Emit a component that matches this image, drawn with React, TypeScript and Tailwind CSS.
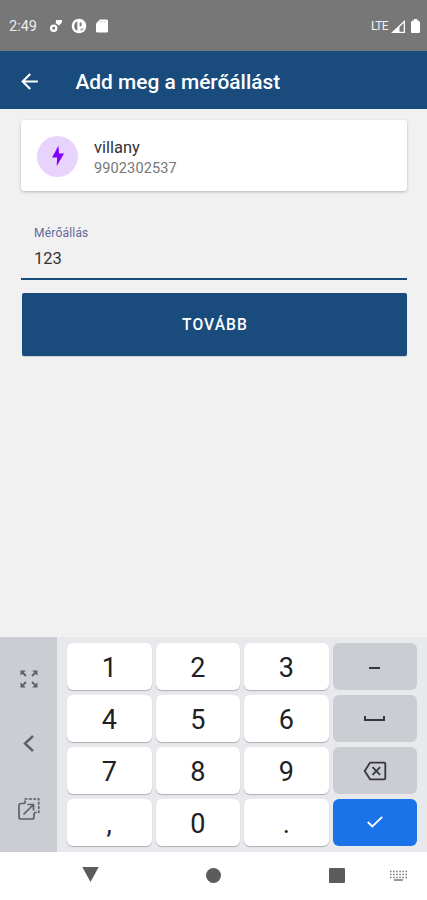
import React from 'react';

function Glyph({ d, className, box = '0 0 24 24' }: { d: string; className: string; box?: string }) {
  return (
    <svg viewBox={box} className={className} fill="currentColor" aria-hidden="true">
      <path fillRule="evenodd" d={d} />
    </svg>
  );
}

function StatusBar() {
  return (
    <div className="flex h-[51px] items-center justify-between bg-[#777777] pt-[2px] pl-[9px] pr-[7px] text-white">
      <div className="flex items-center">
        <span className="w-[40px] pt-px text-[14.5px] leading-5 text-[#ececec]">2:49</span>
        <svg viewBox="0 0 14 14" className="mt-[-1px] h-[14px] w-[14px]" aria-hidden="true">
          <circle cx="4.7" cy="9.2" r="2.6" fill="none" stroke="white" strokeWidth="2.3" />
          <path fill="white" d="M7.2 1H13v2.2L10.2 6.4 6.6 4.2z" />
        </svg>
        <svg viewBox="0 0 16 16" className="ml-[8px] mt-[-1px] h-[16px] w-[16px]" aria-hidden="true">
          <circle cx="8" cy="8" r="7.3" fill="white" />
          <path d="M6.3 3.2v9.6A5.3 5.3 0 0 1 6.3 3.2z" fill="#777777" />
          <path d="M8.6 4.6h1.9v3.6H8.6z" fill="#777777" />
          <path d="M9.6 10.6h3.2a5.3 5.3 0 0 1-3.2 2.6z" fill="#a8a8a8" />
        </svg>
        <svg viewBox="0 0 12 14" className="ml-[9px] mt-[-1px] h-[14px] w-[12px]" aria-hidden="true">
          <path fill="white" d="M4 .5h6.7a1.3 1.3 0 0 1 1.3 1.3v10.4a1.3 1.3 0 0 1-1.3 1.3H1.3A1.3 1.3 0 0 1 0 12.2V4.5z" />
          <path d="M4.5 2v1.3M6.7 2v1.3M8.9 2v1.3" stroke="#aaaaaa" strokeWidth=".8" />
        </svg>
      </div>
      <div className="flex items-center">
        <span className="mt-[-1px] text-[12px] leading-5 tracking-[-0.6px] text-[#f2f2f2]">LTE</span>
        <svg viewBox="0 0 14 13" className="ml-[3px] mt-[-1px] h-[13px] w-[14px]" aria-hidden="true">
          <path d="M0 13L14 0v13zM8.5 7v4.7h4.2V3.1z" fillRule="evenodd" fill="white" />
        </svg>
        <svg viewBox="0 0 9 14" className="ml-[6px] mt-[-1px] h-[14px] w-[9px]" aria-hidden="true">
          <path fill="white" d="M2.8 0h3.4v1.5h1.2L9 3v10a1 1 0 0 1-1 1H1a1 1 0 0 1-1-1V3l1.6-1.5h1.2z" />
        </svg>
      </div>
    </div>
  );
}

function AppBar() {
  return (
    <header className="flex h-[58px] items-center bg-[#194b7d] pt-[2px] pl-[17px] text-white">
      <Glyph className="h-[25px] w-[25px]" d="M20 11H7.83l5.59-5.59L12 4l-8 8 8 8 1.41-1.41L7.83 13H20v-2z" />
      <h1 className="ml-[33.5px] pt-px text-[20.9px] font-medium leading-7 whitespace-nowrap">Add meg a mérőállást</h1>
    </header>
  );
}

function MeterCard() {
  return (
    <section className="mx-[21px] mt-[11px] flex h-[71px] w-[386px] items-center rounded-[3px] bg-white pl-4 shadow-[0_1px_3px_rgba(0,0,0,0.25)]">
      <div className="mt-[1px] flex h-[41px] w-[41px] items-center justify-center rounded-full bg-[#e8d3fd]">
        <svg viewBox="0 0 14 22" className="h-[22px] w-[14px]" aria-hidden="true">
          <path fill="#8000ff" d="M7.4.8L1.1 12.4h5L5.7 21.3 13 8.6H8z" />
        </svg>
      </div>
      <div className="ml-4 pt-[4px]">
        <p className="text-[16.5px] leading-[21px] text-[#333333]">villany</p>
        <p className="text-[14.5px] leading-[21px] tracking-[0.13px] text-[#777777]">9902302537</p>
      </div>
    </section>
  );
}

function MeterInput() {
  return (
    <div className="mx-[21px] mt-[24px] flex h-[65px] w-[386px] flex-col border-b-2 border-[#194b7d] pt-[10px] pl-[13px]">
      <span className="text-[12px] leading-4 tracking-[0.2px] text-[#62689c]">Mérőállás</span>
      <span className="mt-[8px] text-[16.5px] leading-5 text-[#333333]">123</span>
    </div>
  );
}

const whiteKey = 'bg-white text-[#202124] shadow-[0_1px_1px_rgba(0,0,0,0.25)]';
const grayKey = 'bg-[#cccdd3] text-[#35373b]';

function Key({ children, className = whiteKey }: { children: React.ReactNode; className?: string }) {
  return <button className={`flex items-center justify-center rounded-[6px] pt-[3px] text-[27px] leading-none ${className}`}>{children}</button>;
}

function Keyboard() {
  return (
    <div className="flex h-[215px] bg-[#e8e9ed]">
      <aside className="flex w-[57px] flex-col items-center bg-[#cccdd3] pt-[33px] text-[#5f6167]">
        <svg viewBox="0 0 18 18" className="h-[18px] w-[18px]" aria-hidden="true">
          <path fill="currentColor" d="M.5.5h5.3L.5 5.8zM17.5.5v5.3L12.2.5zM.5 17.5v-5.3l5.3 5.3zM17.5 17.5h-5.3l5.3-5.3z" />
          <path stroke="currentColor" strokeWidth="1.8" d="M2 2l4 4M16 2l-4 4M2 16l4-4M16 16l-4-4" />
        </svg>
        <svg viewBox="0 0 11 17" className="mt-[47px] h-[17px] w-[11px]" fill="none" stroke="currentColor" strokeWidth="2.4" aria-hidden="true">
          <path d="M10 1L2 8.5 10 16" />
        </svg>
        <svg viewBox="0 0 22 22" className="mt-[46px] h-[22px] w-[22px]" fill="none" stroke="currentColor" strokeWidth="1.7" aria-hidden="true">
          <path d="M6.8 5.5H3a2 2 0 0 0-2 2V19a2 2 0 0 0 2 2h11a2 2 0 0 0 2-2v-4M5.5 16.5L15 7M9.5 6.5h6v6" />
          <path d="M7 5.5V1h13.7v13.5H16" strokeDasharray="3 1.2" />
        </svg>
      </aside>
      <div className="grid flex-1 grid-cols-4 grid-rows-4 gap-x-[4px] gap-y-[5px] pt-[6px] pr-[10px] pb-[6px] pl-[10px]">
        <Key>1</Key>
        <Key>2</Key>
        <Key>3</Key>
        <Key className={grayKey}>
          <span className="mt-[-1px] h-[2px] w-[11px] bg-current" />
        </Key>
        <Key>4</Key>
        <Key>5</Key>
        <Key>6</Key>
        <Key className={grayKey}>
          <span className="mt-[-3px] h-[5px] w-[21px] border-2 border-t-0 border-current" />
        </Key>
        <Key>7</Key>
        <Key>8</Key>
        <Key>9</Key>
        <Key className={grayKey}>
          <svg viewBox="0 0 24 20" className="mt-[-2px] h-[20px] w-[24px]" fill="none" stroke="currentColor" strokeWidth="1.8" aria-hidden="true">
            <path d="M7 1.7h14.3a1 1 0 0 1 1 1v14.6a1 1 0 0 1-1 1H7L1.7 10z" strokeLinejoin="round" />
            <path d="M9.5 6.1l7.6 7.8M17.1 6.1l-7.6 7.8" />
          </svg>
        </Key>
        <Key>,</Key>
        <Key>0</Key>
        <Key>.</Key>
        <Key className="bg-[#1a73e8] text-white">
          <svg viewBox="0 0 16 12" className="mt-[-4px] h-[12px] w-[16px]" fill="none" stroke="currentColor" strokeWidth="1.8" aria-hidden="true">
            <path d="M.8 6l4.5 4.5L15.2.8" />
          </svg>
        </Key>
      </div>
    </div>
  );
}

function NavigationBar() {
  return (
    <nav className="flex h-[48px] items-center bg-white pl-[82px] text-[#5c5c5c]">
      <Glyph className="mt-[-3px] h-[15px] w-[17px]" box="0 0 17 15" d="M.3 0h16.4L8.5 15z" />
      <span className="ml-[107px] mt-[-1px] h-[15px] w-[15px] rounded-full bg-current" />
      <span className="ml-[108px] mt-[-1px] h-[15px] w-[16px] rounded-[1px] bg-current" />
      <svg viewBox="0 0 17 11" className="ml-[45px] mt-[-2px] h-[11px] w-[17px]" fill="none" stroke="#777777" aria-hidden="true">
        <path d="M0 1.5h17M0 4.5h17M0 7.5h17" strokeWidth="1.5" strokeDasharray="1.5 1.6" />
        <path d="M4 10h9" strokeWidth="1.5" />
      </svg>
    </nav>
  );
}

export default function App() {
  return (
    <div className="flex h-[900px] w-[427px] flex-col overflow-hidden bg-[#f1f1f1] font-['Roboto',sans-serif]">
      <StatusBar />
      <AppBar />
      <main className="flex-1">
        <MeterCard />
        <MeterInput />
        <button className="ml-[21.5px] mt-[13px] flex h-[63px] w-[385px] items-center justify-center rounded-[2px] bg-[#194b7d] pt-[2px] pl-[2px] text-[15.6px] font-medium tracking-[1.1px] text-white shadow-[0_1px_1px_rgba(0,0,0,0.15)]">
          TOVÁBB
        </button>
      </main>
      <Keyboard />
      <NavigationBar />
    </div>
  );
}
